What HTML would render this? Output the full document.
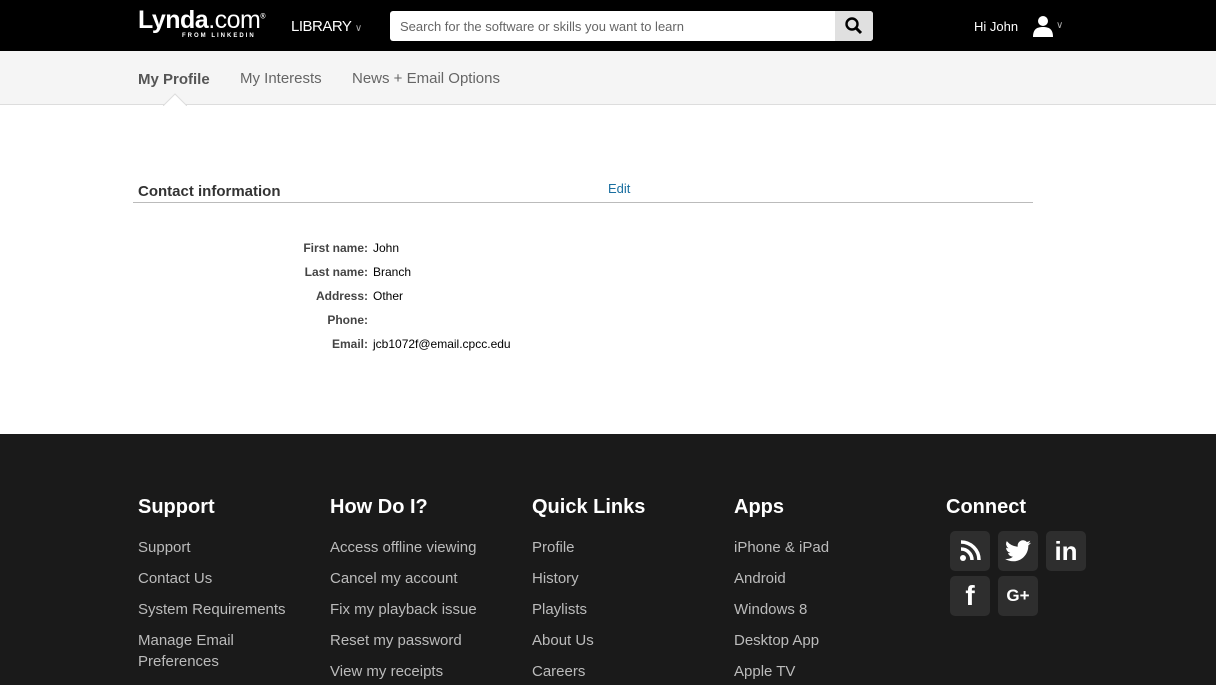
<!DOCTYPE html>
<html><head><style>
*{margin:0;padding:0;box-sizing:border-box}
body{width:1216px;height:685px;overflow:hidden;font-family:"Liberation Sans",Arial,sans-serif;background:#fff;position:relative}
.top{position:absolute;left:0;top:0;width:1216px;height:51px;background:#000}
.sub{position:absolute;left:0;top:51px;width:1216px;height:54px;background:#f5f5f5;border-bottom:1px solid #ddd}
.a{position:absolute;white-space:nowrap}
.foot{position:absolute;left:0;top:434px;width:1216px;height:251px;background:#1a1a1a}
.fh{position:absolute;color:#fff;font-weight:bold;font-size:20px;top:496px}
.fl{position:absolute;color:#bbb;font-size:15px;line-height:31px;top:532px}
.ic{position:absolute;width:40px;height:40px;background:#2e2e2e;border-radius:5px;color:#fff;display:flex;align-items:center;justify-content:center;font-weight:bold}
.lab{position:absolute;right:848px;font-size:12px;font-weight:bold;color:#444}
.val{position:absolute;left:373px;font-size:12px;color:#000}
</style></head><body>
<div class="top"></div>
<div class="a" style="left:138px;top:6px;color:#fff;font-size:25px;font-weight:bold;letter-spacing:-0.5px">Lynda<span style="font-weight:normal">.com</span><sup style="font-size:7px">®</sup></div>
<div class="a" style="left:182px;top:33px;color:#fff;font-size:6px;font-weight:bold;letter-spacing:2px">FROM LINKEDIN</div>
<div class="a" style="left:291px;top:18px;color:#fff;font-size:15px;letter-spacing:-0.5px">LIBRARY <span style="font-size:10px;color:#aaa">∨</span></div>
<div class="a" style="left:390px;top:11px;width:483px;height:30px;background:#fff;border-radius:3px"></div>
<div class="a" style="left:400px;top:19px;color:#666;font-size:13px">Search for the software or skills you want to learn</div>
<div class="a" style="left:835px;top:11px;width:38px;height:30px;background:#e0e0e0;border-radius:0 3px 3px 0"></div>
<svg class="a" style="left:845px;top:17px" width="18" height="18" viewBox="0 0 18 18"><circle cx="7" cy="7" r="5.5" stroke="#000" stroke-width="2.4" fill="none"/><path d="M11 11l5 5" stroke="#000" stroke-width="3"/></svg>
<div class="a" style="left:974px;top:19px;color:#fff;font-size:13px">Hi John</div>
<svg class="a" style="left:1032px;top:15px" width="22" height="22" viewBox="0 0 22 22"><circle cx="11" cy="6" r="5" fill="#fff"/><path d="M1 22c0-8 4-10 10-10s10 2 10 10z" fill="#fff"/></svg>
<div class="a" style="left:1056px;top:20px;color:#aaa;font-size:10px">∨</div>
<div class="sub"></div>
<div class="a" style="left:138px;top:71px;color:#555;font-size:15px;font-weight:bold">My Profile</div>
<div class="a" style="left:240px;top:70px;color:#666;font-size:15px">My Interests</div>
<div class="a" style="left:352px;top:70px;color:#666;font-size:15px">News + Email Options</div>
<svg class="a" style="left:163px;top:93px" width="24" height="13"><path d="M0 13L12 1 24 13" fill="#fff" stroke="#ddd"/></svg>
<div class="a" style="left:138px;top:183px;font-size:15px;font-weight:bold;color:#333">Contact information</div>
<div class="a" style="left:608px;top:181px;font-size:13px;color:#1a6fa0">Edit</div>
<div class="a" style="left:133px;top:202px;width:900px;height:1px;background:#bbb"></div>
<div class="lab" style="top:241px">First name:</div><div class="val" style="top:241px">John</div>
<div class="lab" style="top:265px">Last name:</div><div class="val" style="top:265px">Branch</div>
<div class="lab" style="top:289px">Address:</div><div class="val" style="top:289px">Other</div>
<div class="lab" style="top:313px">Phone:</div>
<div class="lab" style="top:337px">Email:</div><div class="val" style="top:337px">jcb1072f@email.cpcc.edu</div>
<div class="foot"></div>
<div class="fh" style="left:138px">Support</div>
<div class="fh" style="left:330px">How Do I?</div>
<div class="fh" style="left:532px">Quick Links</div>
<div class="fh" style="left:734px">Apps</div>
<div class="fh" style="left:946px">Connect</div>
<div class="fl" style="left:138px">Support<br>Contact Us<br>System Requirements<br><span style="line-height:21px;display:inline-block;margin-top:5px">Manage Email<br>Preferences</span></div>
<div class="fl" style="left:330px">Access offline viewing<br>Cancel my account<br>Fix my playback issue<br>Reset my password<br>View my receipts</div>
<div class="fl" style="left:532px">Profile<br>History<br>Playlists<br>About Us<br>Careers</div>
<div class="fl" style="left:734px">iPhone &amp; iPad<br>Android<br>Windows 8<br>Desktop App<br>Apple TV</div>
<div class="ic" style="left:950px;top:531px"><svg width="22" height="22" viewBox="0 0 22 22"><circle cx="4" cy="18" r="3" fill="#fff"/><path d="M2 9a11 11 0 0 1 11 11M2 2a18 18 0 0 1 18 18" stroke="#fff" stroke-width="3.5" fill="none"/></svg></div>
<div class="ic" style="left:998px;top:531px;font-size:24px"><svg width="26" height="22" viewBox="0 0 24 20"><path d="M24 2.4a10 10 0 0 1-2.8.8A5 5 0 0 0 23.3.5a10 10 0 0 1-3.1 1.2A4.9 4.9 0 0 0 11.8 6 14 14 0 0 1 1.7.9a4.9 4.9 0 0 0 1.5 6.6A4.9 4.9 0 0 1 1 6.9a4.9 4.9 0 0 0 3.9 4.9 5 5 0 0 1-2.2.1 4.9 4.9 0 0 0 4.6 3.4A9.9 9.9 0 0 1 0 17.3 14 14 0 0 0 7.5 19.5c9.1 0 14-7.5 14-14v-.6A10 10 0 0 0 24 2.4z" fill="#fff"/></svg></div>
<div class="ic" style="left:1046px;top:531px;font-size:26px">in</div>
<div class="ic" style="left:950px;top:576px;font-size:28px">f</div>
<div class="ic" style="left:998px;top:576px;font-size:17px">G+</div>
</body></html>
